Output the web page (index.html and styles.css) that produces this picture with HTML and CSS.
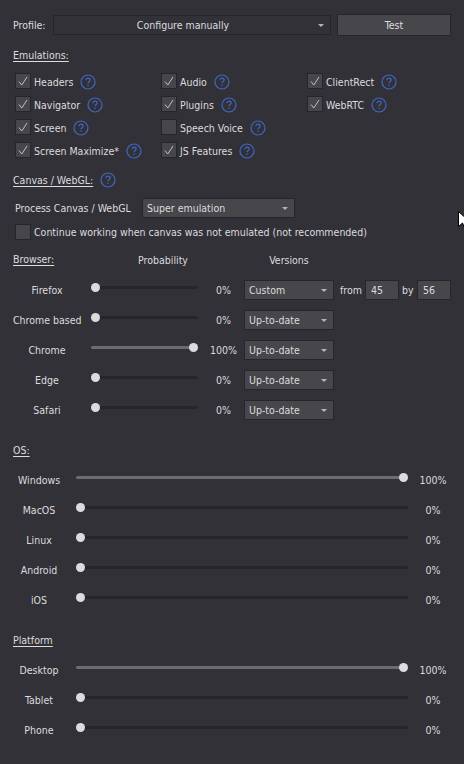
FILE: index.html
```html
<!DOCTYPE html>
<html lang="en">
<head>
    <meta charset="UTF-8">
    <meta name="viewport" content="width=device-width, initial-scale=1.0">
    <title>Browser settings</title>
    <link rel="stylesheet" href="styles.css">
</head>
<body>
    <svg class="icon-defs" width="0" height="0" aria-hidden="true">
        <symbol id="help" viewBox="0 0 16 16">
            <circle cx="8" cy="8" r="7" fill="none" stroke="#3f68c4" stroke-width="1.2"/>
            <path d="M5.900 6.200C6 4.900 6.900 4.200 8 4.200c1.200 0 2.100.8 2.100 1.800 0 1.700-2.100 1.600-2.100 3.300" fill="none" stroke="#3f68c4" stroke-width="1.200"/>
            <rect x="7.400" y="10.600" width="1.200" height="1.300" fill="#3f68c4"/>
        </symbol>
        <symbol id="tick" viewBox="0 0 14 14">
            <path d="M3 7.500L5.800 11L11 3" fill="none" stroke="#c0c0c2" stroke-width="1"/>
        </symbol>
    </svg>

    <div class="panel">
        <div class="profile-row">
            <span class="profile-label">Profile:</span>
            <div class="select profile-select"><span class="select-text">Configure manually</span><i class="arrow"></i></div>
            <button class="test-button">Test</button>
        </div>

        <h3 class="heading emulations-heading">Emulations:</h3>
        <div class="check-grid">
            <div class="check-item"><span class="check"><svg><use href="#tick"/></svg></span>Headers<svg class="help"><use href="#help"/></svg></div>
            <div class="check-item"><span class="check"><svg><use href="#tick"/></svg></span>Audio<svg class="help"><use href="#help"/></svg></div>
            <div class="check-item"><span class="check"><svg><use href="#tick"/></svg></span>ClientRect<svg class="help"><use href="#help"/></svg></div>
            <div class="check-item"><span class="check"><svg><use href="#tick"/></svg></span>Navigator<svg class="help"><use href="#help"/></svg></div>
            <div class="check-item"><span class="check"><svg><use href="#tick"/></svg></span>Plugins<svg class="help"><use href="#help"/></svg></div>
            <div class="check-item"><span class="check"><svg><use href="#tick"/></svg></span>WebRTC<svg class="help"><use href="#help"/></svg></div>
            <div class="check-item"><span class="check"><svg><use href="#tick"/></svg></span>Screen<svg class="help"><use href="#help"/></svg></div>
            <div class="check-item"><span class="check"></span>Speech Voice<svg class="help"><use href="#help"/></svg></div>
            <div class="check-item empty"></div>
            <div class="check-item"><span class="check"><svg><use href="#tick"/></svg></span>Screen Maximize*<svg class="help"><use href="#help"/></svg></div>
            <div class="check-item"><span class="check"><svg><use href="#tick"/></svg></span>JS Features<svg class="help"><use href="#help"/></svg></div>
        </div>

        <h3 class="heading canvas-heading"><u>Canvas / WebGL:</u><svg class="help"><use href="#help"/></svg></h3>
        <div class="process-row">
            <span class="process-label">Process Canvas / WebGL</span>
            <div class="select process-select"><span class="select-text">Super emulation</span><i class="arrow"></i></div>
        </div>
        <div class="check-item continue-row"><span class="check"></span>Continue working when canvas was not emulated (not recommended)</div>

        <div class="browser-head">
            <h3 class="heading">Browser:</h3>
            <span class="col-probability">Probability</span>
            <span class="col-versions">Versions</span>
        </div>

        <div class="browser-row">
            <span class="row-label">Firefox</span>
            <div class="slider"><i class="knob"></i></div>
            <span class="percent">0%</span>
            <div class="select version-select"><span class="select-text">Custom</span><i class="arrow"></i></div>
            <span class="range-word from">from</span>
            <div class="num-box">45</div>
            <span class="range-word by">by</span>
            <div class="num-box">56</div>
        </div>
        <div class="browser-row">
            <span class="row-label">Chrome based</span>
            <div class="slider"><i class="knob"></i></div>
            <span class="percent">0%</span>
            <div class="select version-select"><span class="select-text">Up-to-date</span><i class="arrow"></i></div>
        </div>
        <div class="browser-row">
            <span class="row-label">Chrome</span>
            <div class="slider full"><i class="knob"></i></div>
            <span class="percent">100%</span>
            <div class="select version-select"><span class="select-text">Up-to-date</span><i class="arrow"></i></div>
        </div>
        <div class="browser-row">
            <span class="row-label">Edge</span>
            <div class="slider"><i class="knob"></i></div>
            <span class="percent">0%</span>
            <div class="select version-select"><span class="select-text">Up-to-date</span><i class="arrow"></i></div>
        </div>
        <div class="browser-row">
            <span class="row-label">Safari</span>
            <div class="slider"><i class="knob"></i></div>
            <span class="percent">0%</span>
            <div class="select version-select"><span class="select-text">Up-to-date</span><i class="arrow"></i></div>
        </div>

        <h3 class="heading os-heading">OS:</h3>
        <div class="wide-row"><span class="row-label">Windows</span><div class="slider full"><i class="knob"></i></div><span class="percent">100%</span></div>
        <div class="wide-row"><span class="row-label">MacOS</span><div class="slider"><i class="knob"></i></div><span class="percent">0%</span></div>
        <div class="wide-row"><span class="row-label">Linux</span><div class="slider"><i class="knob"></i></div><span class="percent">0%</span></div>
        <div class="wide-row"><span class="row-label">Android</span><div class="slider"><i class="knob"></i></div><span class="percent">0%</span></div>
        <div class="wide-row"><span class="row-label">iOS</span><div class="slider"><i class="knob"></i></div><span class="percent">0%</span></div>

        <h3 class="heading platform-heading">Platform</h3>
        <div class="wide-row"><span class="row-label">Desktop</span><div class="slider full"><i class="knob"></i></div><span class="percent">100%</span></div>
        <div class="wide-row"><span class="row-label">Tablet</span><div class="slider"><i class="knob"></i></div><span class="percent">0%</span></div>
        <div class="wide-row"><span class="row-label">Phone</span><div class="slider"><i class="knob"></i></div><span class="percent">0%</span></div>
    </div>

    <svg class="cursor" width="12" height="19" viewBox="0 0 12 19">
        <path d="M.5.5v15l4-3.500 2.500 6 2.500-1-2.500-6h5z" fill="#fff" stroke="#000"/>
    </svg>
</body>
</html>
```

FILE: styles.css
```css
html, body {
    margin: 0;
    height: 100%;
}

body {
    background-color: #323137;
    color: #dcdcde;
    font-family: "DejaVu Sans Condensed", "DejaVu Sans", sans-serif;
    font-stretch: condensed;
    font-size: 10.5px;
    line-height: 14px;
    white-space: nowrap;
    overflow: hidden;
    position: relative;
}

.icon-defs {
    position: absolute;
}

.panel {
    padding: 14px 13px 0 13px;
}

.heading {
    margin: 0;
    font-size: inherit;
    font-weight: normal;
    text-decoration: underline;
    text-underline-offset: 2px;
}

/* profile */
.profile-row {
    display: flex;
    align-items: center;
    height: 22px;
}

.profile-label {
    flex: none;
    width: 40px;
}

.select {
    display: flex;
    flex: none;
    align-items: center;
    justify-content: space-between;
    box-sizing: border-box;
    height: 20px;
    padding: 0 4px;
    background-color: #47464b;
    border: 1px solid #26252a;
}

.arrow {
    width: 0;
    height: 0;
    margin-right: 2px;
    border-left: 3px solid transparent;
    border-right: 3px solid transparent;
    border-top: 3px solid #b4b4b6;
}

.profile-select {
    width: 278px;
    background-color: #323137;
}

.profile-select .select-text {
    flex: 1;
    padding-right: 10px;
    text-align: center;
}

.test-button {
    flex: none;
    box-sizing: border-box;
    width: 114px;
    height: 22px;
    margin-left: 6px;
    padding: 0;
    background-color: #47464b;
    border: 1px solid #26252a;
    color: #dcdcde;
    font: inherit;
}

/* emulation checkboxes */
.emulations-heading {
    margin-top: 12px;
}

.check-grid {
    display: grid;
    grid-template-columns: 146px 146px 146px;
    grid-auto-rows: 23px;
    margin: 8px 0 0 2px;
}

.check-item {
    display: flex;
    align-items: center;
}

.check {
    box-sizing: border-box;
    flex: none;
    align-self: flex-start;
    width: 16px;
    height: 16px;
    margin-top: 3px;
    margin-right: 3px;
    background-color: #47464b;
    border: 1px solid #26252a;
}

.check svg {
    display: block;
    width: 14px;
    height: 14px;
}

.help {
    flex: none;
    width: 16px;
    height: 16px;
    margin-left: 7px;
}

/* canvas */
.canvas-heading {
    display: flex;
    align-items: center;
    height: 16px;
    margin-top: 10px;
    text-decoration: none;
}

.process-row {
    display: flex;
    align-items: center;
    height: 20px;
    margin: 10px 0 0 2px;
}

.process-label {
    flex: none;
    width: 127px;
}

.process-select {
    width: 153px;
}

.continue-row {
    height: 16px;
    margin: 6px 0 0 2px;
}

.continue-row .check {
    margin-top: 0;
}

/* browser table */
.browser-head {
    display: grid;
    grid-template-columns: 78px 144px 1fr;
    margin-top: 12px;
}

.col-probability,
.col-versions {
    padding-top: 1px;
    text-align: center;
}

.col-versions {
    width: 90px;
    margin-left: 9px;
}

.browser-row {
    display: flex;
    align-items: center;
    height: 30px;
}

.browser-head + .browser-row {
    margin-top: 8px;
}

.browser-row .row-label {
    flex: none;
    width: 68px;
    text-align: center;
}

.browser-row .slider {
    width: 107px;
    margin-left: 10px;
}

.browser-row .percent {
    flex: none;
    width: 29px;
    margin-left: 11px;
    text-align: center;
}

.version-select {
    width: 90px;
    margin-left: 6px;
}

.range-word {
    flex: none;
}

.range-word.from {
    width: 25px;
    margin-left: 6px;
}

.range-word.by {
    width: 18px;
    padding-left: 3px;
    box-sizing: border-box;
}

.num-box {
    flex: none;
    box-sizing: border-box;
    width: 34px;
    height: 20px;
    padding: 2px 5px;
    background-color: #47464b;
    border: 1px solid #26252a;
}

/* sliders */
.slider {
    position: relative;
    flex: none;
    height: 3px;
    margin-top: -5px;
    background-color: #26252a;
    border-radius: 2px;
}

.slider.full {
    background-color: #6d6c72;
}

.knob {
    position: absolute;
    top: -3px;
    left: 0;
    width: 9px;
    height: 9px;
    border-radius: 50%;
    background-color: #dcdcde;
}

.slider.full .knob {
    left: auto;
    right: 0;
}

/* os and platform */
.os-heading,
.platform-heading {
    margin-top: 18px;
}

.os-heading + .wide-row,
.platform-heading + .wide-row {
    margin-top: 8px;
}

.wide-row {
    display: flex;
    align-items: center;
    height: 30px;
}

.wide-row .row-label {
    flex: none;
    width: 52px;
    text-align: center;
}

.wide-row .slider {
    width: 332px;
    margin-left: 11px;
}

.wide-row .percent {
    flex: none;
    width: 30px;
    margin-left: 10px;
    text-align: center;
}

/* mouse pointer that was on screen */
.cursor {
    position: absolute;
    left: 458px;
    top: 211px;
}
```
